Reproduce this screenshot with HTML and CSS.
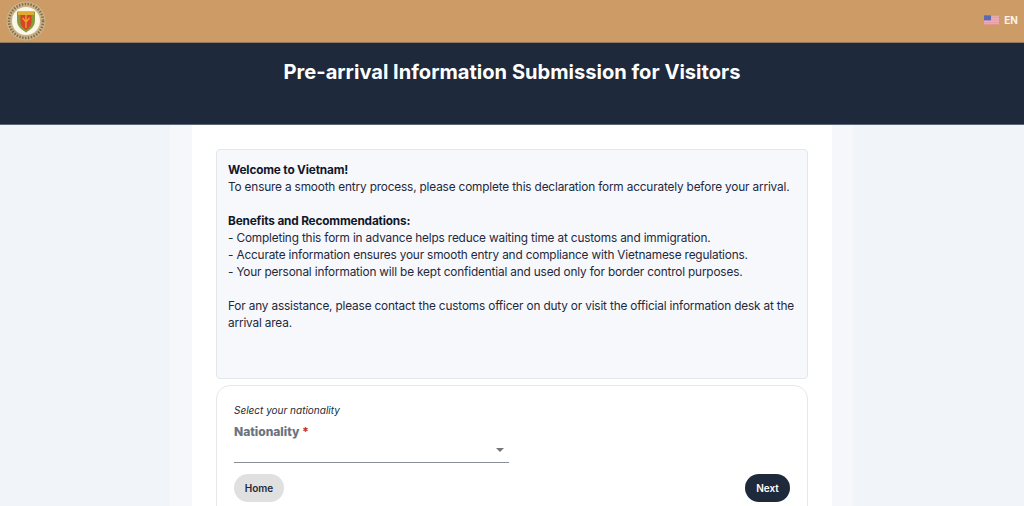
FILE: index.html
```html
<!DOCTYPE html>
<html lang="en">
<head>
<meta charset="utf-8">
<title>Pre-arrival Information Submission for Visitors</title>
<link rel="stylesheet" href="styles.css">
</head>
<body>
<header class="topbar">
  <svg class="logo" viewBox="0 0 40 40" aria-hidden="true">
    <circle cx="20" cy="20" r="19.5" fill="#cdb184"/>
    <circle cx="20" cy="20" r="17" fill="none" stroke="#77704f" stroke-width="2.6" stroke-dasharray="1.4 1.5"/>
    <circle cx="20" cy="20" r="14" fill="#f9f6ea"/>
    <path d="M11 10.500h18v9c0 6-4.500 9-9 12-4.500-3-9-6-9-12z" fill="#8a9a3a"/>
    <path d="M12 10.500h16v3.500H12z" fill="#e0ab2e"/>
    <path d="M14.500 14h11v7c0 4-2.700 6-5.500 8-2.800-2-5.500-4-5.500-8z" fill="#d8432a"/>
    <path d="M20 14v13M16.500 17l3.500 4 3.500-4" fill="none" stroke="#e9a62c" stroke-width="1.300"/>
  </svg>
  <div class="lang">
    <svg class="flag" viewBox="0 0 16 10" aria-hidden="true">
      <rect width="16" height="10" fill="#f6eee8"/>
      <path d="M0 .7h16M0 2.800h16M0 5h16M0 7.200h16M0 9.300h16" stroke="#d8566a" stroke-width="1"/>
      <rect width="7.500" height="5.400" fill="#5a6ab4"/>
    </svg>
    <span>EN</span>
  </div>
</header>
<section class="hero">
  <h1>Pre-arrival Information Submission for Visitors</h1>
</section>
<main class="band">
  <div class="sheet">
    <div class="notice">
      <p><b>Welcome to Vietnam!</b><br>To ensure a smooth entry process, please complete this declaration form accurately before your arrival.</p>
      <p><b>Benefits and Recommendations:</b><br>- Completing this form in advance helps reduce waiting time at customs and immigration.<br>- Accurate information ensures your smooth entry and compliance with Vietnamese regulations.<br>- Your personal information will be kept confidential and used only for border control purposes.</p>
      <p>For any assistance, please contact the customs officer on duty or visit the official information desk at the arrival area.</p>
    </div>
    <form class="form-card">
      <div class="hint">Select your nationality</div>
      <div class="field">
        <div class="label">Nationality <span class="req">*</span></div>
        <div class="select"><span class="caret"></span></div>
      </div>
      <div class="actions">
        <button type="button" class="btn btn-home">Home</button>
        <button type="button" class="btn btn-next">Next</button>
      </div>
    </form>
  </div>
</main>
</body>
</html>
```
FILE: styles.css
```css
* { box-sizing: border-box; }
html, body { margin: 0; height: 506px; overflow: hidden; }
body {
  background: #f1f4f9;
  font-family: "Inter", "Noto Sans", sans-serif;
  color: #1e293b;
}
.topbar {
  height: 43px;
  background: #cd9b66;
  border-bottom: 1px solid #8f7a60;
  display: flex;
  align-items: center;
  justify-content: space-between;
  padding: 0 6px 3px 6px;
}
.logo { width: 40px; height: 40px; display: block; margin-top: 3px; }
.lang {
  display: flex;
  align-items: center;
  gap: 5px;
  color: #fbf3e8;
  font-size: 10px;
  font-weight: 700;
}
.flag { width: 15px; height: 10px; display: block; }
.hero {
  height: 82px;
  background: #1e293b;
  border-bottom: 1px solid #5b6676;
  padding-top: 16px;
}
.hero h1 {
  margin: 0;
  color: #fff;
  text-align: center;
  font-size: 20.1px;
  line-height: 26px;
  font-weight: 700;
}
.band {
  width: 683px;
  margin-left: 170px;
  padding: 0 21px 0 22px;
  background: #f6f7fb;
}
.sheet {
  background: #fff;
  padding: 24px 24px 20px;
  display: flex;
  flex-direction: column;
  gap: 6px;
}
.notice {
  height: 230px;
  background: #f7f8fb;
  border: 1px solid #e3e6ea;
  border-radius: 4px;
  padding: 12px 11px 11px;
  font-size: 11.8px;
  letter-spacing: -0.16px;
  line-height: 17px;
  color: #1e293b;
}
.notice p { margin: 0 0 17px; }
.notice b { font-weight: 700; color: #0f172a; }
.form-card {
  border: 1px solid #e5e7eb;
  border-radius: 14px;
  padding: 17px 17px 16px;
}
.hint {
  font-size: 10px;
  line-height: 14px;
  font-style: italic;
  color: #222b38;
}
.field { width: 275px; margin-top: 6px; }
.label {
  font-size: 12px;
  line-height: 17px;
  font-weight: 800;
  color: #6b7280;
}
.req { color: #d32f2f; }
.select {
  height: 23px;
  border-bottom: 1px solid #8a8f96;
  display: flex;
  align-items: center;
  justify-content: flex-end;
  padding: 0 5px 3px 0;
}
.caret {
  width: 0;
  height: 0;
  border-left: 4px solid transparent;
  border-right: 4px solid transparent;
  border-top: 4px solid #757575;
}
.actions {
  display: flex;
  justify-content: space-between;
  margin-top: 11px;
}
.btn {
  height: 28px;
  border: 0;
  border-radius: 14px;
  font-family: inherit;
  font-size: 10px;
  font-weight: 600;
  padding: 0;
}
.btn-home { width: 50px; background: #e0e0e0; color: #1e293b; }
.btn-next { width: 45px; background: #1e293b; color: #fff; }
```
